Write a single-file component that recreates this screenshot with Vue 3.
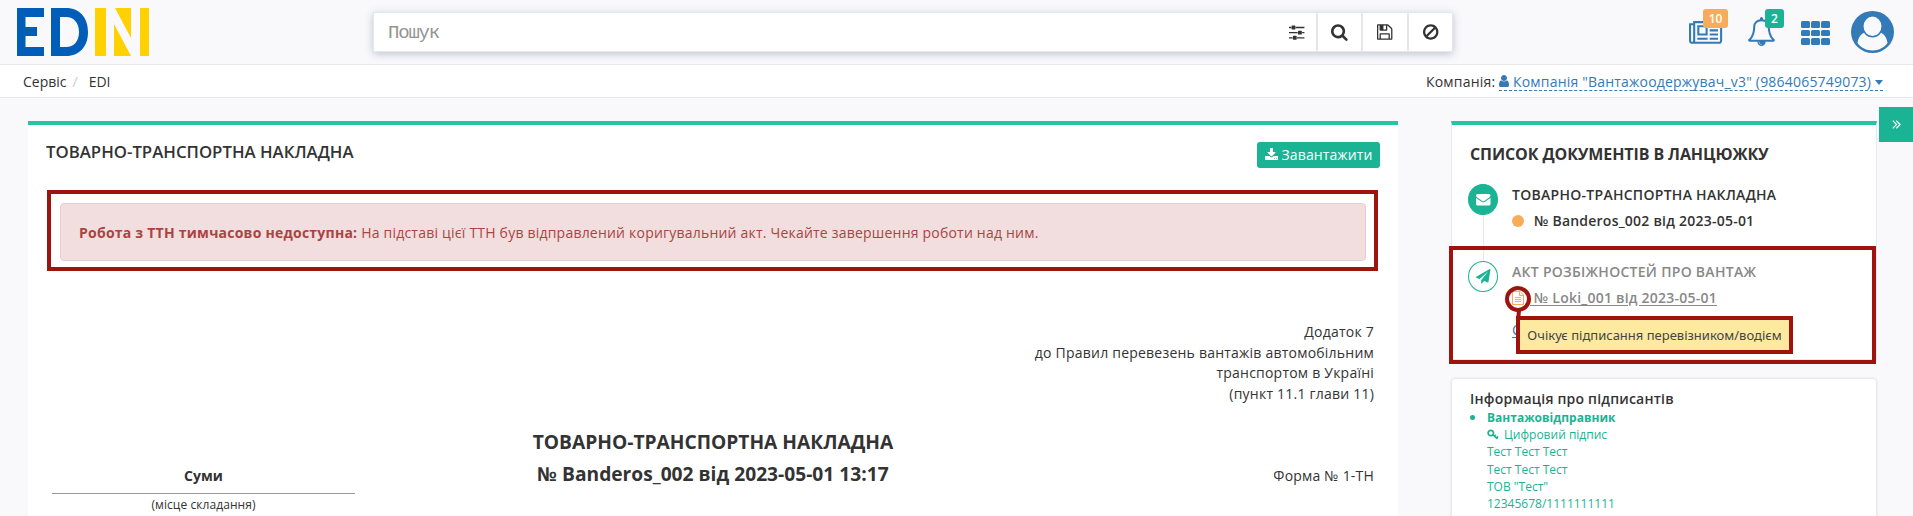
<script setup>
const icons = {
  search: { w: 1664, d: 'M1152 704q0 185 -131.5 316.5t-316.5 131.5t-316.5 -131.5t-131.5 -316.5t131.5 -316.5t316.5 -131.5t316.5 131.5t131.5 316.5zM1664 -128q0 -52 -38 -90t-90 -38q-54 0 -90 38l-343 342q-179 -124 -399 -124q-143 0 -273.5 55.5t-225 150t-150 225t-55.5 273.5t55.5 273.5t150 225t225 150t273.5 55.5t273.5 -55.5t225 -150t150 -225t55.5 -273.5q0 -220 -124 -399l343 -343q37 -37 37 -90z' },
  user: { w: 1280, d: 'M1280 137q0 -109 -62.5 -187t-150.5 -78h-854q-88 0 -150.5 78t-62.5 187q0 85 8.5 160.5t31.5 152t58.5 131t94 89t134.5 34.5q131 -128 313 -128t313 128q76 0 134.5 -34.5t94 -89t58.5 -131t31.5 -152t8.5 -160.5zM1024 1024q0 -159 -112.5 -271.5t-271.5 -112.5t-271.5 112.5t-112.5 271.5t112.5 271.5t271.5 112.5t271.5 -112.5t112.5 -271.5z' },
  save: { w: 1536, d: 'M384 0h768v384h-768v-384zM1280 0h128v896q0 14 -10 38.5t-20 34.5l-281 281q-10 10 -34 20t-39 10v-416q0 -40 -28 -68t-68 -28h-576q-40 0 -68 28t-28 68v416h-128v-1280h128v416q0 40 28 68t68 28h832q40 0 68 -28t28 -68v-416zM896 928v320q0 13 -9.5 22.5t-22.5 9.5h-192q-13 0 -22.5 -9.5t-9.5 -22.5v-320q0 -13 9.5 -22.5t22.5 -9.5h192q13 0 22.5 9.5t9.5 22.5zM1536 896v-928q0 -40 -28 -68t-68 -28h-1344q-40 0 -68 28t-28 68v1344q0 40 28 68t68 28h928q40 0 88 -20t76 -48l280 -280q28 -28 48 -76t20 -88z' },
  sliders: { w: 1536, d: 'M352 128v-128h-352v128h352zM704 256q26 0 45 -19t19 -45v-256q0 -26 -19 -45t-45 -19h-256q-26 0 -45 19t-19 45v256q0 26 19 45t45 19h256zM864 640v-128h-864v128h864zM224 1152v-128h-224v128h224zM1536 128v-128h-736v128h736zM576 1280q26 0 45 -19t19 -45v-256q0 -26 -19 -45t-45 -19h-256q-26 0 -45 19t-19 45v256q0 26 19 45t45 19h256zM1216 768q26 0 45 -19t19 -45v-256q0 -26 -19 -45t-45 -19h-256q-26 0 -45 19t-19 45v256q0 26 19 45t45 19h256zM1536 640v-128h-224v128h224zM1536 1152v-128h-864v128h864z' },
  ban: { w: 1536, d: 'M1312 643q0 161 -87 295l-754 -753q137 -89 297 -89q111 0 211.5 43.5t173.5 116.5t116 174.5t43 212.5zM313 344l755 754q-135 91 -300 91q-148 0 -273 -73t-198 -199t-73 -274q0 -162 89 -299zM1536 643q0 -157 -61 -300t-163.5 -246t-245 -164t-298.5 -61t-298.5 61t-245 164t-163.5 246t-61 300t61 299.5t163.5 245.5t245 164t298.5 61t298.5 -61t245 -164t163.5 -245.5t61 -299.5z' },
  news: { w: 2048, d: 'M1024 1024h-384v-384h384v384zM1152 384v-128h-640v128h640zM1152 1152v-640h-640v640h640zM1792 384v-128h-512v128h512zM1792 640v-128h-512v128h512zM1792 896v-128h-512v128h512zM1792 1152v-128h-512v128h512zM256 192v960h-128v-960q0 -26 19 -45t45 -19t45 19t19 45zM1920 192v1088h-1536v-1088q0 -33 -11 -64h1483q26 0 45 19t19 45zM2048 1408v-1216q0 -80 -56 -136t-136 -56h-1664q-80 0 -136 56t-56 136v1088h256v128h1792z' },
  bell: { w: 1792, d: 'M912 -160q0 16 -16 16q-59 0 -101.5 42.5t-42.5 101.5q0 16 -16 16t-16 -16q0 -73 51.5 -124.5t124.5 -51.5q16 0 16 16zM246 128h1300q-266 300 -266 832q0 51 -24 105t-69 103t-121.5 80.5t-169.5 31.5t-169.5 -31.5t-121.5 -80.5t-69 -103t-24 -105q0 -532 -266 -832zM1728 128q0 -52 -38 -90t-90 -38h-448q0 -106 -75 -181t-181 -75t-181 75t-75 181h-448q-52 0 -90 38t-38 90q50 42 91 88t85 119.5t74.5 158.5t50 206t19.5 260q0 152 117 282.5t307 158.5q-8 19 -8 39q0 40 28 68t68 28t68 -28t28 -68q0 -20 -8 -39q190 -28 307 -158.5t117 -282.5q0 -139 19.5 -260t50 -206t74.5 -158.5t85 -119.5t91 -88z' },
  download: { w: 1664, d: 'M1280 192q0 26 -19 45t-45 19t-45 -19t-19 -45t19 -45t45 -19t45 19t19 45zM1536 192q0 26 -19 45t-45 19t-45 -19t-19 -45t19 -45t45 -19t45 19t19 45zM1664 416v-320q0 -40 -28 -68t-68 -28h-1472q-40 0 -68 28t-28 68v320q0 40 28 68t68 28h465l135 -136q58 -56 136 -56t136 56l136 136h464q40 0 68 -28t28 -68zM1339 985q17 -41 -14 -70l-448 -448q-18 -19 -45 -19t-45 19l-448 448q-31 29 -14 70q17 39 59 39h256v448q0 26 19 45t45 19h256q26 0 45 -19t19 -45v-448h256q42 0 59 -39z' },
  envelope: { w: 1792, d: 'M1792 826v-794q0 -66 -47 -113t-113 -47h-1472q-66 0 -113 47t-47 113v794q44 -49 101 -87q362 -246 497 -345q57 -42 92.5 -65.5t94.5 -48t110 -24.5h1h1q51 0 110 24.5t94.5 48t92.5 65.5q170 123 498 345q57 39 100 87zM1792 1120q0 -79 -49 -151t-122 -123q-376 -261 -468 -325q-10 -7 -42.5 -30.5t-54 -38t-52 -32.5t-57.5 -27t-50 -9h-1h-1q-23 0 -50 9t-57.5 27t-52 32.5t-54 38t-42.5 30.5q-91 64 -262 182.5t-205 142.5q-62 42 -117 115.5t-55 136.5q0 78 41.5 130t118.5 52h1472q65 0 112.5 -47t47.5 -113z' },
  plane: { w: 1792, d: 'M1764 1525q33 -24 27 -64l-256 -1536q-5 -29 -32 -45q-14 -8 -31 -8q-11 0 -24 5l-453 185l-242 -295q-18 -23 -49 -23q-13 0 -22 4q-19 7 -30.5 23.5t-11.5 36.5v349l864 1059l-1069 -925l-395 162q-37 14 -40 55q-2 40 32 59l1664 960q15 9 32 9q20 0 36 -11z' },
}
const box = (n) => `0 0 ${icons[n].w} 1792`
const tools = ['search', 'save', 'ban']
const cells = [0, 1, 2, 3, 4, 5, 6, 7, 8]
const signer = ['Тест Тест Тест', 'Тест Тест Тест', 'ТОВ "Тест"', '12345678/1111111111']
</script>

<template>
  <div class="page">
    <header class="top">
      <svg class="logo" viewBox="0 0 132 48" width="132" height="48" role="img" aria-label="EDIN">
        <path fill="#005eb8" d="M0 0H27V9H8.500V19H20V28H8.500V39H27V48H0ZM34 0H49C63 0 71 10 71 24S63 48 49 48H34ZM43 9V39H49C57 39 62 33 62 24S57 9 49 9Z" />
        <path fill="#ffd100" d="M78 0H89V48H78ZM97 16L114 48H97ZM98 0H114V30ZM123 0H132V48H123Z" />
      </svg>
      <div class="search">
        <span class="placeholder">Пошук</span>
        <svg class="fa sliders" :viewBox="box('sliders')"><path transform="matrix(1 0 0 -1 0 1536)" :d="icons.sliders.d" /></svg>
        <button v-for="t in tools" :key="t" class="tool">
          <svg class="fa" :class="'i-' + t" :viewBox="box(t)"><path transform="matrix(1 0 0 -1 0 1536)" :d="icons[t].d" /></svg>
        </button>
      </div>
      <nav class="actions">
        <span class="action news">
          <svg class="fa" :viewBox="box('news')"><path transform="matrix(1 0 0 -1 0 1536)" :d="icons.news.d" /></svg>
          <b class="badge orange">10</b>
        </span>
        <span class="action bell">
          <svg class="fa" :viewBox="box('bell')"><path transform="matrix(1 0 0 -1 0 1536)" :d="icons.bell.d" /></svg>
          <b class="badge green">2</b>
        </span>
        <span class="apps"><i v-for="c in cells" :key="c"></i></span>
        <svg class="avatar" viewBox="0 0 43 42" width="43" height="42">
          <ellipse cx="21.500" cy="21" rx="21.500" ry="21" fill="#337ab7" />
          <path d="M6.500 32C7.500 26 10 22.500 14 21.500C16 24 18.500 25.500 21.500 25.500S27 24 29 21.500C33 22.500 35.500 26 36.500 32C33 36.800 27.500 39.500 21.500 39.500S10 36.800 6.500 32Z" fill="#f9f9fc" />
          <ellipse cx="21.500" cy="15.300" rx="9.700" ry="10.500" fill="#f9f9fc" stroke="#337ab7" stroke-width="1.500" />
        </svg>
      </nav>
    </header>

    <div class="crumbs">
      <div><span>Сервіс</span><span class="slash">/</span><span>EDI</span></div>
      <div class="company">
        Компанія:
        <a><svg class="fa" :viewBox="box('user')"><path transform="matrix(1 0 0 -1 0 1536)" :d="icons.user.d" /></svg> Компанія "Вантажоодержувач_v3" (9864065749073) <i class="caret"></i></a>
      </div>
    </div>

    <div class="content">
      <main class="doc">
        <div class="doc-head">
          <h5>ТОВАРНО-ТРАНСПОРТНА НАКЛАДНА</h5>
          <button class="download">
            <svg class="fa" :viewBox="box('download')"><path transform="matrix(1 0 0 -1 0 1536)" :d="icons.download.d" /></svg>
            <span>Завантажити</span>
          </button>
        </div>
        <div class="frame">
          <div class="alert"><b>Робота з ТТН тимчасово недоступна:</b> На підставі цієї ТТН був відправлений коригувальний акт. Чекайте завершення роботи над ним.</div>
        </div>
        <div class="annex">Додаток 7<br />до Правил перевезень вантажів автомобільним<br />транспортом в Україні<br />(пункт 11.1 глави 11)</div>
        <div class="title-row">
          <div class="place"><b>Суми</b><small>(місце складання)</small></div>
          <div class="title">ТОВАРНО-ТРАНСПОРТНА НАКЛАДНА<br />№ Banderos_002 від 2023-05-01 13:17</div>
          <div class="form">Форма № 1-ТН</div>
        </div>
      </main>

      <aside class="side">
        <section class="chain">
          <h5>СПИСОК ДОКУМЕНТІВ В ЛАНЦЮЖКУ</h5>
          <div class="step">
            <span class="mark full"><svg class="fa" :viewBox="box('envelope')"><path transform="matrix(1 0 0 -1 0 1536)" :d="icons.envelope.d" /></svg></span>
            <div class="info">
              <div>ТОВАРНО-ТРАНСПОРТНА НАКЛАДНА</div>
              <div class="ref"><i class="dot"></i>№ Banderos_002 від 2023-05-01</div>
            </div>
          </div>
          <div class="step second">
            <span class="mark"><svg class="fa" :viewBox="box('plane')"><path transform="matrix(1 0 0 -1 0 1536)" :d="icons.plane.d" /></svg></span>
            <div class="info muted">
              <div>АКТ РОЗБІЖНОСТЕЙ ПРО ВАНТАЖ</div>
              <div class="ref">
                <svg class="file" viewBox="0 0 12 14" width="12" height="14" fill="none" stroke="#f8ac59"><path d="M.5 .5H8L11.500 4V13.500H.5ZM7.500 .5V4.500H11.500M3 6.500H9M3 8.500H9M3 10.500H9" /></svg><u>&nbsp;№ Loki_001 від 2023-05-01</u>
              </div>
              <div class="more">С</div>
            </div>
          </div>
          <div class="outline"></div>
          <div class="ring"></div>
          <svg class="stem" width="10" height="12" viewBox="0 0 10 12"><path d="M5 0L4 12" stroke="#9e130e" stroke-width="4" /></svg>
          <div class="tip">Очікує підписання перевізником/водієм</div>
        </section>
        <section class="signers">
          <h6>Інформація про підписантів</h6>
          <ul>
            <li>
              <b>Вантажовідправник</b>
              <div class="sig">
                <svg width="12" height="11" viewBox="0 0 12 11" fill="none" stroke="#1ab394"><circle cx="3.800" cy="4" r="2.700" stroke-width="1.700" /><path d="M5.800 5.600L10.500 9.800M9.500 9L11 7.400M7.500 7.200L8.700 5.900" stroke-width="1.600" /></svg>
                Цифровий підпис
              </div>
              <div v-for="(s, i) in signer" :key="i">{{ s }}</div>
            </li>
          </ul>
        </section>
        <div class="toggle">
          <svg width="9" height="9" viewBox="0 0 9 9" fill="none" stroke="#fff" stroke-width="1.200"><path d="M.8 .6L4.600 4.500L.8 8.400M4.300 .6L8.100 4.500L4.300 8.400" /></svg>
        </div>
      </aside>
    </div>
  </div>
</template>

<style>
body { margin: 0; background: #f9f9fc; overflow: hidden; }
</style>

<style scoped>
* { box-sizing: border-box; }
.page { height: 516px; overflow: hidden; background: #f9f9fc; font: 14px/20px "Open Sans", "Noto Sans", sans-serif; color: #333; }
h5, h6 { margin: 0; font-weight: 600; }
button { border: 0; padding: 0; font: inherit; color: inherit; }
.fa { height: 1em; fill: currentColor; overflow: visible; display: inline-block; flex: none; }
.top { height: 65px; border-bottom: 1px solid #e7eaec; display: flex; align-items: flex-start; position: relative; }
.logo { margin: 8px 0 0 17px; }
.search { margin: 12px 0 0 224px; width: 1080px; height: 40px; background: #fff; border: 1px solid #e5e6e7; box-shadow: 0 2px 8px rgba(60, 70, 110, .3); display: flex; align-items: center; }
.placeholder { flex: 1; padding: 2px 0 0 14px; font: 19px/36px "Liberation Mono", monospace; letter-spacing: -1.200px; color: #949494; }
.sliders { font-size: 18px; margin-right: 11px; }
.tool { width: 45.500px; height: 38px; border-left: 2px solid #e5e6e7; background: #fff; display: flex; align-items: center; justify-content: center; font-size: 18px; }
.actions { margin-left: auto; display: flex; width: 224px; height: 64px; position: relative; color: #337ab7; }
.action { position: relative; display: flex; }
.news { margin-top: 19px; width: 58px; height: 32px; }
.news .fa, .bell .fa { font-size: 29px; }
.bell { width: 54px; margin-top: 17px; height: 32px; }
.badge { position: absolute; height: 19px; border-radius: 3px; color: #fff; font: 600 12px/19px "Open Sans", sans-serif; text-align: center; top: -8px; }
.orange { left: 14px; top: -10px; width: 25px; background: #f8ac59; }
.green { left: 18px; width: 19px; background: #1ab394; }
.apps { margin-top: 21px; display: grid; grid-template-columns: repeat(3, 8.500px); grid-auto-rows: 6.500px; gap: 2px 1.700px; width: 50px; }
.apps i { background: #337ab7; border-radius: 1.500px; }
.avatar { margin-top: 11px; flex: none; }
.crumbs { height: 33px; background: #fff; border-bottom: 1px solid #e7eaec; display: flex; justify-content: space-between; padding: 7px 30px 0 23px; line-height: 20px; }
.slash { color: #ccc; margin: 0 11px 0 6px; }
.company { letter-spacing: .2px; }
.company a { color: #337ab7; display: inline-block; height: 19px; border-bottom: 1px dashed #337ab7; line-height: 20px; }
.company .fa { vertical-align: -1px; }
.caret { display: inline-block; border: 4.500px solid transparent; border-top: 5px solid #337ab7; border-bottom: 0; vertical-align: 2px; }
.content { display: flex; align-items: flex-start; padding: 23px 0 0 28px; }
.doc { width: 1370px; height: 400px; background: #fff; border-top: 4px solid #23c6a3; }
.doc-head { display: flex; justify-content: space-between; padding: 17px 18px 0; height: 65px; }
.doc-head h5 { font-size: 16.800px; line-height: 20px; }
.download { width: 123px; height: 26px; border-radius: 3px; background: #1ab394; color: #fff; display: flex; align-items: center; justify-content: center; gap: 4px; letter-spacing: .1px; }
.frame { margin-left: 19px; width: 1331px; height: 81px; border: 4px solid #9e130e; padding: 9px 8px 9px 9px; }
.alert { height: 58px; border: 1px solid #ebccd1; border-radius: 4px; background: #f2dede; color: #a94442; padding: 19px 18px; line-height: 20px; letter-spacing: .21px; }
.alert b { letter-spacing: .24px; }
.annex { margin: 51px 24px 0 0; text-align: right; line-height: 20.700px; letter-spacing: .22px; }
.title-row { display: grid; grid-template-columns: 303px 1fr 303px; margin: 21px 24px 0; }
.place { text-align: center; padding-top: 40px; }
.place b { display: block; height: 28px; line-height: 20px; border-bottom: 1px solid #999; font-size: 14px; }
.place small { display: block; font-size: 12px; line-height: 22px; letter-spacing: .07px; }
.title { text-align: center; font-size: 19.200px; font-weight: 700; line-height: 32px; }
.form { text-align: right; padding-top: 40px; letter-spacing: .2px; }
.side { position: relative; margin-left: 53px; width: 426px; }
.chain { position: relative; height: 239px; background: #fff; border: 1px solid #e7eaec; border-top: 4px solid #23c6a3; padding: 19px 18px 0; }
.chain h5 { font-size: 16px; line-height: 20px; font-weight: 700; letter-spacing: -.1px; }
.step { position: relative; display: flex; margin-top: 20px; margin-left: -2px; height: 57px; }
.step:not(.second)::before { content: ""; position: absolute; left: 15px; top: 0; height: 80px; width: 1px; background: #e7eaec; }
.mark { position: relative; width: 30px; height: 31px; border-radius: 50%; border: 1px solid #1ab394; color: #1ab394; background: #fff; display: flex; align-items: center; justify-content: center; font-size: 14.500px; }
.full { background: #1ab394; color: #fff; }
.info { margin-left: 14px; padding-top: 1px; font-weight: 600; letter-spacing: .28px; }
.info > div { line-height: 20px; }
.info .ref { margin-top: 6px; display: flex; align-items: center; letter-spacing: .23px; }
.dot { width: 12px; height: 12px; border-radius: 50%; background: #f8ac59; margin-right: 10px; }
.muted { color: #888; }
.more { color: #337ab7; text-decoration: underline; text-underline-offset: 2px; margin-top: 12px; font-weight: 400; font-size: 14px; width: 12px; }
.file { margin: 0 6px 0 0; flex: none; }
.ref u { text-underline-offset: 2px; white-space: pre; }
.outline { position: absolute; left: -3px; top: 121px; width: 427px; height: 118px; border: 4px solid #9e130e; }
.ring { position: absolute; left: 53px; top: 161px; width: 26px; height: 26px; border: 4px solid #9e130e; border-radius: 50%; }
.stem { position: absolute; left: 62px; top: 185px; }
.tip { position: absolute; left: 64px; top: 191px; width: 277px; height: 38px; border: 4px solid #9e130e; background: #fde9a0; color: #444; font: 13px/31px "Noto Sans", sans-serif; text-align: center; white-space: nowrap; }
.signers { margin-top: 18px; height: 160px; background: #fff; border: 1px solid #e7eaec; border-radius: 4px; padding: 10px 18px; box-shadow: 0 0 3px rgba(0, 0, 0, .08); }
.signers h6 { font-size: 14px; line-height: 20px; letter-spacing: .2px; }
ul { margin: -1px 0 0; padding: 0 0 0 17px; color: #1ab394; font-size: 12px; line-height: 17.200px; }
li::marker { font-size: 15px; }
.sig { display: flex; align-items: center; gap: 5px; }
.toggle { position: absolute; left: 428px; top: -14px; width: 34px; height: 35px; background: #1ab394; display: flex; align-items: center; justify-content: center; }
</style>
